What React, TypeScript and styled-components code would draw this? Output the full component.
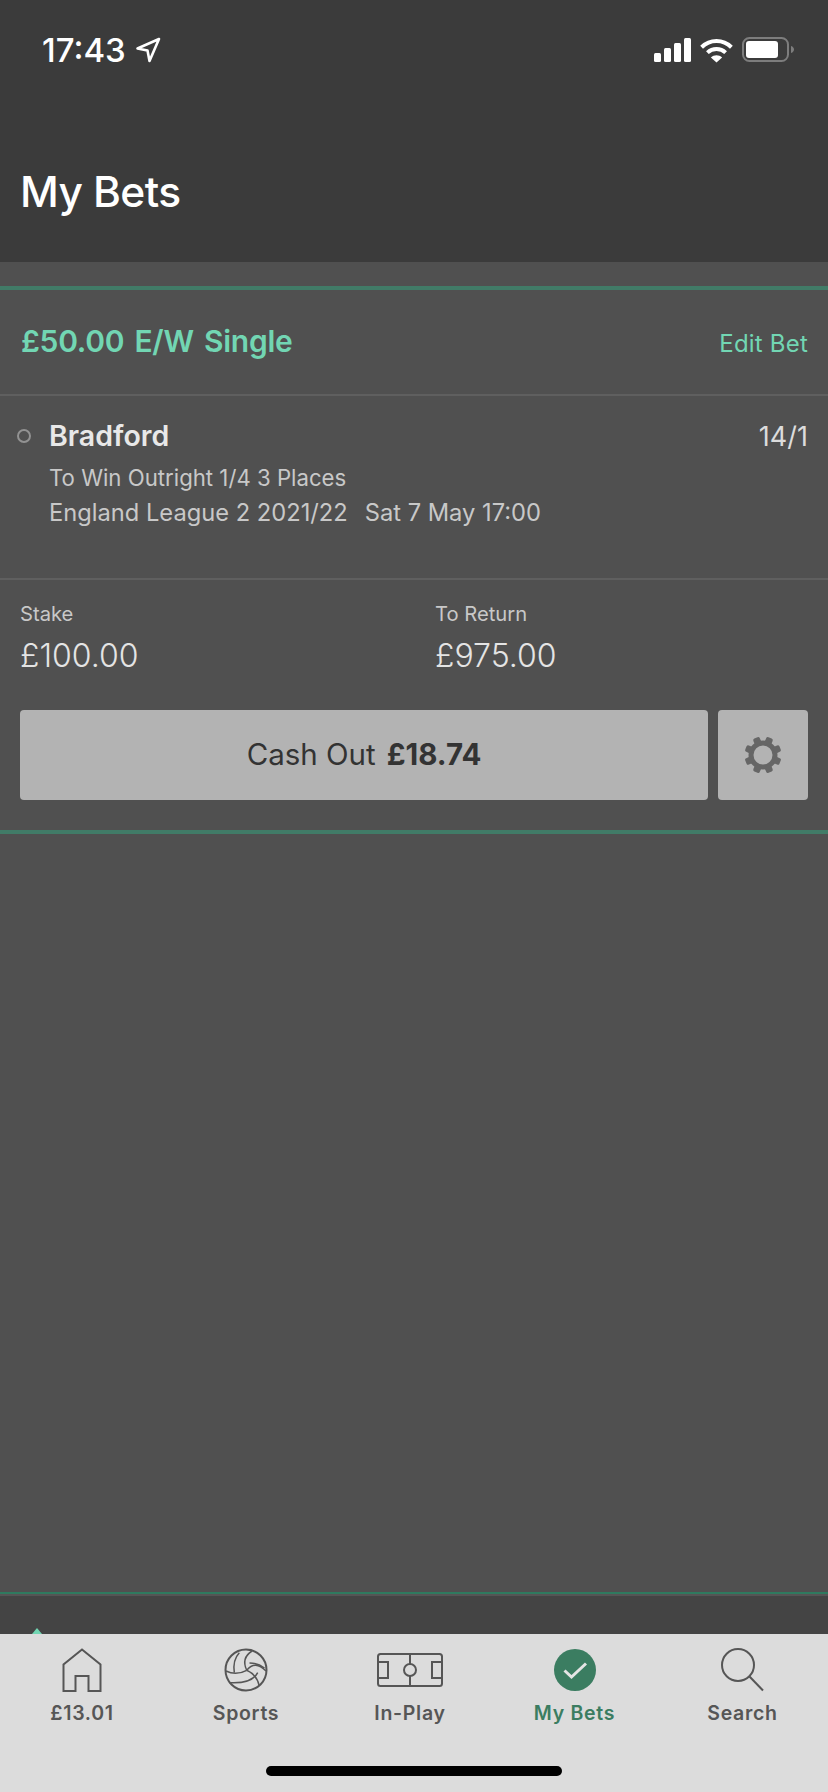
import React from "react";
import styled, { createGlobalStyle } from "styled-components";

const Global = createGlobalStyle`
  html, body { margin: 0; padding: 0; background: #505050; }
  body { font-family: Inter, "Liberation Sans", sans-serif; }
  * { box-sizing: border-box; }
`;

const Page = styled.div`
  width: 828px;
  height: 1792px;
  display: flex;
  flex-direction: column;
  overflow: hidden;
  background: #505050;
`;

const Header = styled.header`
  height: 262px;
  flex: none;
  background: #3b3b3b;
  padding: 37px 34px 0 20px;
  display: flex;
  flex-direction: column;
`;

const StatusBar = styled.div`
  height: 26px;
  display: flex;
  align-items: center;
  justify-content: space-between;
  color: #fff;
`;

const TimeGroup = styled.div`
  display: flex;
  align-items: center;
  gap: 9px;
  padding-left: 22px;
`;

const Time = styled.span`
  font-size: 33px;
  font-weight: 500;
  line-height: 26px;
  letter-spacing: 0;
`;

const StatusIcons = styled.div`
  display: flex;
  align-items: center;
  gap: 9px;
`;

const Title = styled.h1`
  margin: 105px 0 0;
  font-size: 42.5px;
  line-height: 48px;
  font-weight: 500;
  letter-spacing: -0.6px;
  color: #fff;
`;

const Main = styled.main`
  flex: 1;
  padding-top: 24px;
`;

const BetCard = styled.section`
  border-top: 4px solid #417b67;
  border-bottom: 4px solid #417b67;
`;

const BetHeader = styled.div`
  height: 106px;
  padding: 0 20px 0 21px;
  display: flex;
  align-items: center;
  justify-content: space-between;
  border-bottom: 2px solid #5f5f5f;
`;

const BetTitle = styled.div`
  font-size: 30px;
  font-weight: 600;
  letter-spacing: -0.3px;
  word-spacing: 3px;
  color: #72d6b3;
  margin-top: -3px;
`;

const EditLink = styled.div`
  font-size: 24px;
  letter-spacing: 0.2px;
  color: #72d6b3;
  margin-top: 3px;
`;

const Selection = styled.div`
  height: 184px;
  padding: 24px 20px 0 17px;
  display: grid;
  grid-template-columns: 32px 1fr auto;
  align-content: start;
  border-bottom: 2px solid #5f5f5f;
`;

const Dot = styled.span`
  width: 14px;
  height: 14px;
  margin-top: 9px;
  border-radius: 50%;
  border: 2px solid #929292;
`;

const SelectionBody = styled.div`
  display: flex;
  flex-direction: column;
`;

const Runner = styled.div`
  font-size: 28.5px;
  line-height: 32px;
  font-weight: 600;
  color: #e8e8e8;
`;

const Detail = styled.div<{ $large?: boolean }>`
  font-size: ${(p) => (p.$large ? "23.7px" : "22.2px")};
  line-height: 35px;
  color: #c8c8c8;
  margin-top: ${(p) => (p.$large ? "0" : "8px")};
`;

const EventDate = styled.span`
  margin-left: 17px;
`;

const Odds = styled.div`
  font-size: 27px;
  line-height: 32px;
  margin-top: 1px;
  color: #dcdcdc;
`;

const Summary = styled.div`
  padding: 22px 20px 30px;
`;

const Figures = styled.div`
  display: grid;
  grid-template-columns: 415px 1fr;
`;

const FigureLabel = styled.div`
  font-size: 20.2px;
  line-height: 24px;
  color: #c8c8c8;
`;

const FigureValue = styled.div`
  font-size: 32px;
  line-height: 36px;
  margin-top: 12px;
  font-weight: 300;
  color: #e4e4e4;
`;

const Actions = styled.div`
  display: flex;
  gap: 10px;
  margin-top: 36px;
`;

const CashOut = styled.div`
  flex: 1;
  height: 90px;
  background: #b3b3b3;
  border-radius: 4px;
  padding-bottom: 2px;
  display: flex;
  align-items: center;
  justify-content: center;
  gap: 11px;
  font-size: 29.5px;
  color: #333;
`;

const CashAmount = styled.strong`
  font-weight: 700;
`;

const GearButton = styled.div`
  width: 90px;
  height: 90px;
  background: #b3b3b3;
  border-radius: 4px;
  display: flex;
  align-items: center;
  justify-content: center;
`;

const Ticker = styled.div`
  height: 42px;
  flex: none;
  position: relative;
  background: #444;
  border-top: 2px solid #2f7a5f;
  box-shadow: inset 0 2px 0 #555;
`;

const TickerMark = styled.span`
  position: absolute;
  left: 32px;
  bottom: 0;
  width: 10px;
  height: 6px;
  background: #72d6b3;
  clip-path: polygon(50% 0, 100% 100%, 0 100%);
`;

const Nav = styled.nav`
  height: 158px;
  flex: none;
  position: relative;
  background: #dcdcdc;
  display: grid;
  grid-template-columns: 164px 164px 164px 165px 171px;
  align-content: start;
  padding-top: 14px;
`;

const NavItem = styled.div<{ $active?: boolean }>`
  display: flex;
  flex-direction: column;
  align-items: center;
  color: ${(p) => (p.$active ? "#3b7d61" : "#565656")};
`;

const IconSlot = styled.div`
  height: 44px;
  display: flex;
  align-items: center;
  justify-content: center;
`;

const NavLabel = styled.span`
  margin-top: 7px;
  font-size: 19.5px;
  line-height: 28px;
  font-weight: 600;
  letter-spacing: 0.7px;
`;

const HomeIndicator = styled.span`
  position: absolute;
  left: 266px;
  top: 132px;
  width: 296px;
  height: 10px;
  border-radius: 5px;
  background: #000;
`;

const Arrow = () => (
  <svg width="26" height="26" viewBox="0 0 26 26" fill="none">
    <path d="M24 2 2.500 11.500 12.500 13.500 14.500 24 Z" stroke="#fff" strokeWidth="2.600" strokeLinejoin="round" />
  </svg>
);

const Signal = () => (
  <svg width="37" height="24" viewBox="0 0 37 24" fill="#fff">
    <rect x="0" y="15" width="7" height="9" rx="1.500" />
    <rect x="10" y="10" width="7" height="14" rx="1.500" />
    <rect x="20" y="5" width="7" height="19" rx="1.500" />
    <rect x="30" y="0" width="7" height="24" rx="1.500" />
  </svg>
);

const Wifi = () => (
  <svg width="33" height="25" viewBox="0 0 33 25" fill="none" stroke="#fff" strokeWidth="4">
    <path d="M1.600 9.200C10 1 23 1 31.400 9.200" />
    <path d="M7.400 14.600C12.600 9.800 20.400 9.800 25.600 14.600" />
    <path d="M16.500 24.600 10.900 19.400C14 16.600 19 16.600 22.100 19.400Z" fill="#fff" stroke="none" />
  </svg>
);

const Battery = () => (
  <svg width="52" height="26" viewBox="0 0 52 26" fill="none">
    <rect x="1" y="1" width="45" height="23" rx="6.500" stroke="#7d7d7d" strokeWidth="2" />
    <rect x="4" y="4" width="32" height="17" rx="3" fill="#fff" />
    <path d="M49 9c2 .6 3 2 3 3.500S51 15.400 49 16Z" fill="#7d7d7d" />
  </svg>
);

const Gear = () => (
  <svg width="38" height="38" viewBox="-19 -19 38 38" fill="#666">
    <circle r="12" fill="none" stroke="#666" strokeWidth="5" />
    {[22.5, 67.5, 112.5, 157.5, 202.5, 247.5, 292.5, 337.5].map((angle) => (
      <rect key={angle} x="-3.500" y="-18.500" width="7" height="7" rx="1.800" transform={`rotate(${angle})`} />
    ))}
  </svg>
);

const HomeIcon = () => (
  <svg width="40" height="44" viewBox="0 0 40 44" fill="none" stroke="#565656" strokeWidth="2">
    <path d="M1.500 43V16.500L20 1.500 38.500 16.500V43H26.500V28H13.500V43Z" />
  </svg>
);

const BallIcon = () => (
  <svg width="44" height="44" viewBox="0 0 44 44" fill="none" stroke="#565656" strokeWidth="2">
    <circle cx="22" cy="22" r="20.500" />
    <path d="M15.300 4.700Q8.500 12 10.300 24.700" strokeWidth="1.500" />
    <path d="M28 3Q17 10 22.700 22.300" strokeWidth="1.500" />
    <path d="M22.700 22.300Q31 12 42 23" strokeWidth="1.500" />
    <path d="M25.500 15Q34 15 40.500 20" strokeWidth="1.500" />
    <path d="M22.700 22.300Q12 28 2 23" strokeWidth="1.500" />
    <path d="M5.300 34.700Q28 36 33.700 24.700" strokeWidth="1.500" />
    <path d="M22.700 22.300Q33 27 35.300 38" strokeWidth="1.500" />
  </svg>
);

const PitchIcon = () => (
  <svg width="66" height="36" viewBox="0 0 66 36" fill="none" stroke="#565656" strokeWidth="2">
    <rect x="1" y="2" width="64" height="32" rx="2.500" />
    <path d="M33 2V34" />
    <circle cx="33" cy="18" r="6" fill="#dcdcdc" />
    <rect x="1" y="10" width="10" height="16" />
    <rect x="55" y="10" width="10" height="16" />
  </svg>
);

const BetsIcon = () => (
  <svg width="42" height="42" viewBox="0 0 42 42">
    <circle cx="21" cy="21" r="21" fill="#3b7d61" />
    <path d="M10.500 21.500 17.500 28 32 14.500" fill="none" stroke="#e4e4e4" strokeWidth="3" />
  </svg>
);

const SearchIcon = () => (
  <svg width="44" height="44" viewBox="0 0 44 44" fill="none" stroke="#565656" strokeWidth="2">
    <circle cx="17" cy="17" r="16" />
    <path d="M28.500 28.500 42 42.500" />
  </svg>
);

const navItems = [
  { label: "£13.01", icon: <HomeIcon /> },
  { label: "Sports", icon: <BallIcon /> },
  { label: "In-Play", icon: <PitchIcon /> },
  { label: "My Bets", icon: <BetsIcon />, active: true },
  { label: "Search", icon: <SearchIcon /> },
];

export default function App() {
  return (
    <Page>
      <Global />
      <Header>
        <StatusBar>
          <TimeGroup>
            <Time>17:43</Time>
            <Arrow />
          </TimeGroup>
          <StatusIcons>
            <Signal />
            <Wifi />
            <Battery />
          </StatusIcons>
        </StatusBar>
        <Title>My Bets</Title>
      </Header>
      <Main>
        <BetCard>
          <BetHeader>
            <BetTitle>£50.00 E/W Single</BetTitle>
            <EditLink>Edit Bet</EditLink>
          </BetHeader>
          <Selection>
            <Dot />
            <SelectionBody>
              <Runner>Bradford</Runner>
              <Detail>To Win Outright 1/4 3 Places</Detail>
              <Detail $large>
                England League 2 2021/22<EventDate>Sat 7 May 17:00</EventDate>
              </Detail>
            </SelectionBody>
            <Odds>14/1</Odds>
          </Selection>
          <Summary>
            <Figures>
              <div>
                <FigureLabel>Stake</FigureLabel>
                <FigureValue>£100.00</FigureValue>
              </div>
              <div>
                <FigureLabel>To Return</FigureLabel>
                <FigureValue>£975.00</FigureValue>
              </div>
            </Figures>
            <Actions>
              <CashOut>
                Cash Out <CashAmount>£18.74</CashAmount>
              </CashOut>
              <GearButton>
                <Gear />
              </GearButton>
            </Actions>
          </Summary>
        </BetCard>
      </Main>
      <Ticker>
        <TickerMark />
      </Ticker>
      <Nav>
        {navItems.map((item) => (
          <NavItem key={item.label} $active={item.active}>
            <IconSlot>{item.icon}</IconSlot>
            <NavLabel>{item.label}</NavLabel>
          </NavItem>
        ))}
        <HomeIndicator />
      </Nav>
    </Page>
  );
}
